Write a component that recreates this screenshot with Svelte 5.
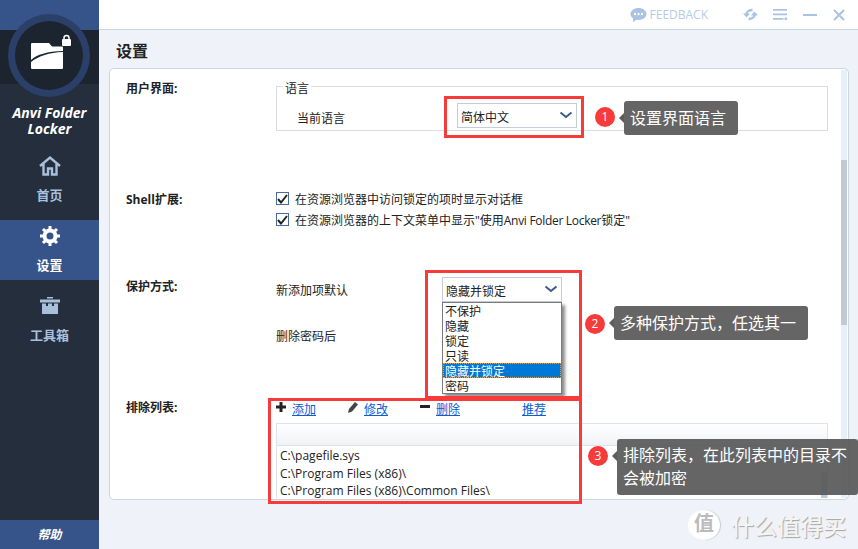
<script>
  const nav = [
    { label: "首页", icon: "home" },
    { label: "设置", icon: "gear", active: true },
    { label: "工具箱", icon: "box" }
  ];
  const protect = ["不保护", "隐藏", "锁定", "只读", "隐藏并锁定", "密码"];
  const excluded = [
    "C:\\pagefile.sys",
    "C:\\Program Files (x86)\\",
    "C:\\Program Files (x86)\\Common Files\\"
  ];
  const checks = [
    { before: "在资源浏览器中访问锁定的项时显示对话框", latin: "", after: "" },
    { before: "在资源浏览器的上下文菜单中显示\"使用", latin: "Anvi Folder Locker", after: "锁定\"" }
  ];
</script>

{#snippet chevron()}
  <svg class="chev" width="14" height="8" viewBox="0 0 14 8">
    <path d="M1.500 1.500 7 6l5.500-4.500" fill="none" stroke="#3d5a8c" stroke-width="2" />
  </svg>
{/snippet}

<div class="app">
  <aside class="side">
    <div class="band"></div>
    <div class="dark"></div>
    <div class="brand">Anvi Folder<br />Locker</div>
    <nav>
      {#each nav as item}
        <div class="nav-item" class:active={item.active}>
          {#if item.icon === "home"}
            <svg width="22" height="20" viewBox="0 0 22 20">
              <path d="M1 10 11 1.500 21 10M4.500 8v10.500h4.500v-6h4v6h4.500V8" fill="none" stroke="#a9c0dd" stroke-width="2.400" />
            </svg>
          {:else if item.icon === "gear"}
            <svg width="22" height="22" viewBox="0 0 22 22">
              <circle cx="11" cy="11" r="5.500" fill="none" stroke="#fff" stroke-width="4" />
              <path d="M11 1v4M11 17v4M1 11h4M17 11h4M4 4l3 3M15 15l3 3M18 4l-3 3M7 15l-3 3" stroke="#fff" stroke-width="3" />
            </svg>
          {:else}
            <svg width="22" height="20" viewBox="0 0 22 20">
              <path d="M8 1h6v1.500H8zM1 3.500h20v3H1z" fill="#a9c0dd" />
              <path d="M3 7.500h4V10h2V7.500h4V10h2V7.500h4V18H3z" fill="#a9c0dd" />
            </svg>
          {/if}
          <span>{item.label}</span>
        </div>
      {/each}
    </nav>
    <div class="help">帮助</div>
    <div class="logo">
      <svg width="42" height="40" viewBox="0 0 42 40">
        <path d="M0 12a1 1 0 0 1 1-1h17l3 3.500h10a1 1 0 0 1 1 1V36a1 1 0 0 1-1 1H1a1 1 0 0 1-1-1z" fill="#fff" />
        <path d="M0 28C6 22.500 16 19.500 32 19v1C18 20.500 8 24 0 30z" fill="#1c2430" />
        <rect x="31" y="7" width="9" height="7" rx="1" fill="#fff" />
        <path d="M33 8V6a2.500 2.500 0 0 1 5 0v2" fill="none" stroke="#fff" stroke-width="1.500" />
      </svg>
    </div>
  </aside>

  <main class="main">
    <header class="top">
      <svg class="fb-icon" width="17" height="16" viewBox="0 0 17 16">
        <path d="M8.500 1C4 1 .5 3.700.5 7c0 1.800 1 3.300 2.600 4.400L3 15l3.500-2.300c.6.100 1.300.2 2 .2 4.500 0 8-2.600 8-5.900S13 1 8.500 1z" fill="#a9c3e4" />
        <circle cx="5" cy="7" r="1.200" fill="#fff" />
        <circle cx="8.500" cy="7" r="1.200" fill="#fff" />
        <circle cx="12" cy="7" r="1.200" fill="#fff" />
      </svg>
      <span class="fb">FEEDBACK</span>
      <svg class="ctl refresh" width="15" height="15" viewBox="0 0 15 15">
        <path d="M3.500 7.500C3.500 4.500 6 3 9.500 3" fill="none" stroke="#a9c3e4" stroke-width="2.400" />
        <path d="M0 6.500h7L3.500 10.500z" fill="#a9c3e4" />
        <path d="M11.500 7.500c0 3-2.500 4.500-6 4.500" fill="none" stroke="#a9c3e4" stroke-width="2.400" />
        <path d="M8 8.500h7L11.500 4.500z" fill="#a9c3e4" />
      </svg>
      <svg class="ctl menu" width="14" height="11" viewBox="0 0 14 11">
        <path d="M0 0h14v1.800H0zM0 4.500h14v1.800H0zM0 9h10.500v1.800H0zM11.500 8.500h2.500v2.500h-2.500z" fill="#a9c3e4" />
      </svg>
      <svg class="ctl min" width="14" height="2" viewBox="0 0 14 2"><path d="M0 0h14v2H0z" fill="#a9c3e4" /></svg>
      <svg class="ctl close" width="12" height="12" viewBox="0 0 12 12">
        <path d="M1 1l10 10M11 1 1 11" stroke="#a9c3e4" stroke-width="2" />
      </svg>
    </header>

    <h1>设置</h1>

    <section class="card">
      <div class="bar"><div class="thumb"></div></div>

      <div class="row ui">
        <div class="label">用户界面:</div>
        <fieldset>
          <legend>语言</legend>
          <span class="lang-label">当前语言</span>
          <div class="select lang"><span>简体中文</span>{@render chevron()}</div>
        </fieldset>
      </div>

      <div class="row shell">
        <div class="label"><span class="latin">Shell</span>扩展:</div>
        <div class="checks">
          {#each checks as c}
            <div class="check">
              <span class="box">
                <svg width="11" height="10" viewBox="0 0 11 10">
                  <path d="M1 5l3 3.500L10 1" fill="none" stroke="#222" stroke-width="2" />
                </svg>
              </span>
              <span>{c.before}<span class="tight">{c.latin}</span>{c.after}</span>
            </div>
          {/each}
        </div>
      </div>

      <div class="row guard">
        <div class="label">保护方式:</div>
        <div class="guard-rows">
          <div class="guard-row">
            <span>新添加项默认</span>
            <div class="select mode"><span>隐藏并锁定</span>{@render chevron()}</div>
          </div>
          <div class="guard-row second"><span>删除密码后</span></div>
        </div>
      </div>

      <div class="row exclude">
        <div class="label">排除列表:</div>
        <div class="ex-body">
          <div class="tools">
            <div class="tool t1">
              <svg width="10" height="10" viewBox="0 0 10 10"><path d="M3.500 0h3v3.500H10v3H6.500V10h-3V6.500H0v-3h3.500z" fill="#222" /></svg>
              <a href="#add">添加</a>
            </div>
            <div class="tool t2">
              <svg width="10" height="11" viewBox="0 0 10 11"><path d="M7 0l3 2.500-6 7L0 11l1-4z" fill="#444" /></svg>
              <a href="#edit">修改</a>
            </div>
            <div class="tool t3">
              <svg width="10" height="4" viewBox="0 0 10 4"><path d="M0 0h10v3H0z" fill="#222" /></svg>
              <a href="#del">删除</a>
            </div>
            <a class="t4" href="#rec">推荐</a>
          </div>
          <div class="table">
            <div class="thead"></div>
            <div class="tbody">
              {#each excluded as path}
                <div class="path">{path}</div>
              {/each}
            </div>
            <div class="table-thumb"></div>
          </div>
        </div>
      </div>
    </section>

    <div class="list">
      {#each protect as opt, i}
        <div class="opt" class:sel={i === 4}>{opt}</div>
      {/each}
    </div>
  </main>

  <!-- annotations laid over the screenshot -->
  <div class="red r1"></div>
  <div class="red r2"></div>
  <div class="red r3"></div>

  <div class="badge b1">1</div>
  <div class="tip t-one">设置界面语言</div>
  <div class="badge b2">2</div>
  <div class="tip t-two">多种保护方式，任选其一</div>
  <div class="badge b3">3</div>
  <div class="tip t-three">排除列表，在此列表中的目录不会被加密</div>

  <div class="mark">
    <span class="seal">值</span>
    <span class="mark-text">什么值得买</span>
  </div>
</div>

<style>
  :global(body) {
    margin: 0;
  }

  .app {
    position: relative;
    display: flex;
    width: 858px;
    height: 549px;
    overflow: hidden;
    font-family: "Open Sans", "Noto Sans CJK SC", sans-serif;
    font-size: 12px;
    color: #222;
    background: #eff3f9;
  }

  .side {
    position: relative;
    display: flex;
    flex-direction: column;
    flex: 0 0 99px;
    background: #242e3d;
  }

  .band {
    height: 30px;
    background: #36548a;
  }

  .dark {
    height: 54px;
    background: #1c2430;
  }

  .brand {
    margin-top: 21px;
    font-size: 14px;
    line-height: 16px;
    font-weight: 700;
    font-style: italic;
    text-align: center;
    color: #fff;
  }

  .logo {
    position: absolute;
    left: 8px;
    top: 14px;
    width: 82px;
    height: 83px;
    box-sizing: border-box;
    border: 7px solid #2b4068;
    border-radius: 50%;
    background: #1c2430;
  }

  .logo svg {
    position: absolute;
    left: 16px;
    top: 11px;
  }

  nav {
    display: flex;
    flex-direction: column;
    gap: 10px;
    margin-top: 13px;
  }

  .nav-item {
    display: flex;
    flex-direction: column;
    align-items: center;
    height: 60px;
    padding-top: 5px;
    box-sizing: border-box;
    gap: 8px;
    font-size: 13px;
    font-weight: 700;
    color: #a9c0dd;
  }

  .nav-item svg {
    height: 22px;
  }

  .nav-item.active {
    background: #36548a;
    color: #fff;
  }

  .help {
    margin-top: auto;
    height: 29px;
    line-height: 29px;
    text-align: center;
    font-weight: 700;
    font-style: italic;
    color: #fff;
    background: #36548a;
  }

  .main {
    position: relative;
    flex: 1;
    min-width: 0;
  }

  .top {
    display: flex;
    align-items: center;
    height: 29px;
    padding-right: 13px;
    justify-content: flex-end;
    background: #fff;
    border-top: 1px solid #1c2f55;
    border-bottom: 1px solid #c9d6e4;
    margin-top: -1px;
  }

  .fb {
    margin: 0 35px 0 3px;
    font-size: 12px;
    color: #b7cbe6;
  }

  .ctl {
    margin-left: 15px;
  }

  .ctl.refresh {
    margin: 0;
  }

  .ctl.min {
    margin-left: 16px;
    margin-right: 1px;
  }

  h1 {
    margin: 11px 0 0 17px;
    height: 27px;
    font-size: 16px;
    line-height: 20px;
    font-weight: 700;
  }

  .card {
    position: relative;
    box-sizing: border-box;
    margin-left: 10px;
    width: 740px;
    height: 432px;
    border: 1px solid #cdd6de;
    border-radius: 5px;
    background: #fff;
    padding-left: 16px;
  }

  .bar {
    position: absolute;
    right: 1px;
    top: 1px;
    bottom: 1px;
    width: 6px;
    background: #e6f0f9;
  }

  .thumb {
    margin-top: 90px;
    height: 165px;
    background: #c0cad3;
  }

  .row {
    display: flex;
  }

  .label {
    flex: 0 0 150px;
    font-weight: 700;
  }

  .ui {
    height: 122px;
    padding-top: 10px;
    box-sizing: border-box;
  }

  fieldset {
    position: relative;
    box-sizing: border-box;
    width: 552px;
    height: 52px;
    margin: 0;
    padding: 0;
    border: 1px solid #dcdcdc;
  }

  legend {
    position: relative;
    top: 3px;
    margin-left: 6px;
    padding: 0 2px;
    line-height: 14px;
  }

  .lang-label {
    position: absolute;
    left: 20px;
    top: 16px;
  }

  .select {
    display: flex;
    align-items: center;
    justify-content: space-between;
    box-sizing: border-box;
    width: 120px;
    height: 25px;
    padding: 2px 3px 0;
    border: 1px solid #c5cbdc;
    background: #fff;
  }

  .chev {
    margin-top: -3px;
  }

  .lang {
    position: absolute;
    left: 180px;
    top: 10px;
  }

  .shell {
    height: 86px;
  }

  .shell .label {
    margin-top: -1px;
  }

  .checks {
    margin-top: -3px;
  }

  .check {
    display: flex;
    align-items: center;
    gap: 6px;
    height: 21px;
  }

  .tight {
    letter-spacing: -0.3px;
  }

  .box {
    display: grid;
    place-items: center;
    box-sizing: border-box;
    width: 13px;
    height: 13px;
    border: 1px solid #4a6a9c;
  }

  .guard {
    height: 120px;
  }

  .guard-row {
    display: flex;
    align-items: center;
    gap: 94px;
  }

  .guard-row span {
    width: 72px;
  }

  .guard-row.second {
    margin-top: 25px;
  }

  .exclude .label {
    padding-top: 1px;
  }

  .tools {
    position: relative;
    height: 15px;
    margin-top: 3px;
  }

  .tool {
    position: absolute;
    top: 0;
    display: flex;
    align-items: center;
    gap: 6px;
  }

  .tool svg {
    margin-top: -4px;
  }

  .t1 {
    left: 0;
  }

  .t2 {
    left: 72px;
  }

  .t3 {
    left: 144px;
  }

  .t4 {
    position: absolute;
    left: 246px;
  }

  a {
    color: #0b5cd5;
    text-decoration: underline;
  }

  .table {
    position: relative;
    box-sizing: border-box;
    width: 552px;
    height: 75px;
    margin-top: 8px;
    border: 1px solid #dbe4ec;
    border-bottom: 0;
  }

  .thead {
    height: 21px;
    background: linear-gradient(#fff, #f0f3f6);
    border-bottom: 1px solid #dbe4ec;
  }

  .tbody {
    padding: 1px 3px;
  }

  .path {
    height: 17.500px;
    line-height: 17.500px;
  }

  .table-thumb {
    position: absolute;
    right: 0;
    bottom: 0;
    width: 6px;
    height: 25px;
    background: #c0cad3;
  }

  .list {
    position: absolute;
    left: 343px;
    top: 302px;
    width: 120px;
    box-sizing: border-box;
    border: 1px solid #7a7a7a;
    background: #fff;
    box-shadow: 3px 3px 3px rgba(0, 0, 0, 0.45);
  }

  .opt {
    height: 14px;
    padding: 1px 0 0 2px;
    line-height: 15px;
  }

  .opt.sel {
    background: #0078d7;
    color: #fff;
    outline: 1px dotted #e8a040;
    outline-offset: -1px;
  }

  .red {
    position: absolute;
    box-sizing: border-box;
    border: 3px solid #f73a3a;
  }

  .r1 {
    left: 444px;
    top: 96px;
    width: 140px;
    height: 42px;
  }

  .r2 {
    left: 425px;
    top: 270px;
    width: 157px;
    height: 129px;
  }

  .r3 {
    left: 268px;
    top: 398px;
    width: 314px;
    height: 106px;
  }

  .badge {
    position: absolute;
    width: 20px;
    height: 20px;
    line-height: 20px;
    border-radius: 50%;
    text-align: center;
    font-size: 12px;
    color: #fff;
    background: #f73a3a;
  }

  .b1 {
    left: 595px;
    top: 107px;
  }

  .b2 {
    left: 585px;
    top: 314px;
  }

  .b3 {
    left: 588px;
    top: 446px;
  }

  .tip {
    position: absolute;
    box-sizing: border-box;
    padding: 5px 6px;
    font-size: 16px;
    line-height: 23px;
    color: #fff;
    background: rgba(88, 88, 88, 0.92);
    border-radius: 3px;
  }

  .tip::before {
    content: "";
    position: absolute;
    left: -5px;
    top: 12px;
    border: 5px solid transparent;
    border-left: 0;
    border-right-color: #5c5c5c;
  }

  .t-one {
    left: 624px;
    top: 101px;
    width: 114px;
    height: 34px;
    padding-top: 6px;
  }

  .t-two {
    left: 614px;
    top: 306px;
    width: 194px;
    height: 34px;
    padding-top: 6px;
  }

  .t-three {
    left: 617px;
    top: 439px;
    width: 241px;
    height: 56px;
  }

  .mark {
    position: absolute;
    left: 688px;
    top: 508px;
    display: flex;
    align-items: center;
    gap: 11px;
  }

  .seal {
    width: 32px;
    height: 30px;
    line-height: 28px;
    border-radius: 50%;
    text-align: center;
    font-size: 20px;
    font-weight: 700;
    color: #bbb;
    background: #fff;
    box-shadow: 1px 0 1px #c8c8c8;
  }

  .mark-text {
    font-size: 23px;
    font-weight: 500;
    color: #f4f4f4;
    text-shadow: 1px 1px 1px #a5a5a5;
  }
</style>
